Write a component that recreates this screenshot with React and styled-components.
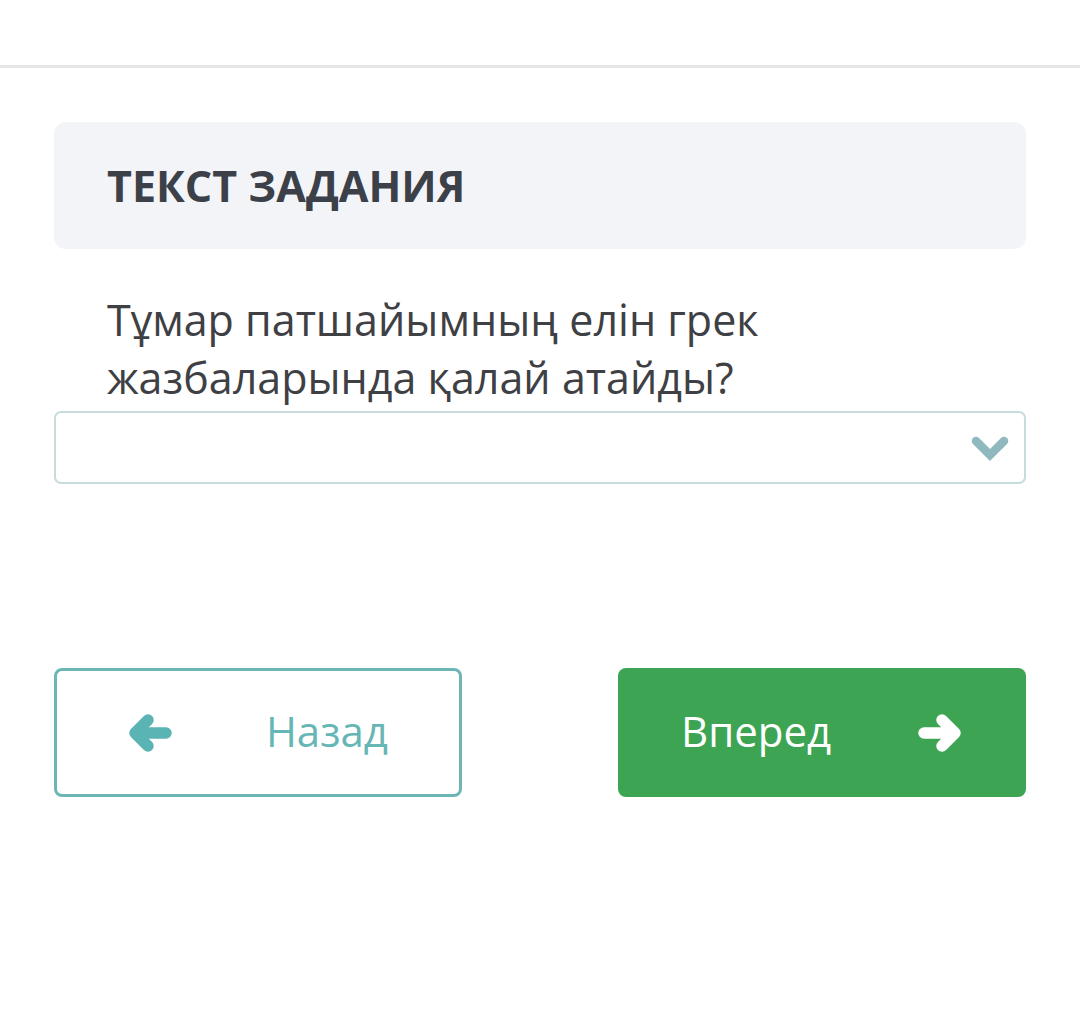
import React from "react";
import styled, { createGlobalStyle } from "styled-components";

const Global = createGlobalStyle`
  html, body { margin: 0; padding: 0; background: #ffffff; }
  body { font-family: "Open Sans", "Noto Sans", sans-serif; }
  * { box-sizing: border-box; }
`;

const Page = styled.div`
  width: 1080px;
  min-height: 1015px;
  background: #fff;
`;

const TopBar = styled.header`
  height: 68px;
  border-bottom: 3px solid #e6e6e6;
`;

const Content = styled.main`
  padding: 54px 54px 0 54px;
  display: flex;
  flex-direction: column;
`;

const TitleCard = styled.section`
  height: 127px;
  background: #f3f4f7;
  border-radius: 12px;
  display: flex;
  align-items: center;
  padding: 0 53px;
`;

const Title = styled.h2`
  margin: 0;
  font-size: 43px;
  font-weight: 700;
  color: #3b4049;
`;

const Question = styled.p`
  margin: 42px 0 4px 0;
  padding: 0 53px;
  font-size: 43px;
  line-height: 58px;
  color: #3e4044;
  max-width: 919px;
`;

const Select = styled.div`
  height: 73px;
  border: 2.5px solid #c6dcdd;
  border-radius: 7px;
  display: flex;
  align-items: center;
  justify-content: flex-end;
  padding-right: 14px;
`;

const Buttons = styled.div`
  margin-top: 184px;
  display: flex;
  justify-content: space-between;
`;

const Button = styled.button`
  width: 408px;
  height: 129px;
  border-radius: 8px;
  font-family: "Open Sans", "Noto Sans", sans-serif;
  font-size: 42px;
  display: flex;
  align-items: center;
  justify-content: space-between;
  cursor: pointer;
  border: ${(p) => (p.$primary ? "none" : "3px solid #6db6b6")};
  background: ${(p) => (p.$primary ? "#3ca453" : "#ffffff")};
  color: ${(p) => (p.$primary ? "#ffffff" : "#66b6b6")};
  padding: ${(p) => (p.$primary ? "0 64px 4px 63px" : "0 71px 4px 71px")};
`;

const IconWrap = styled.span`
  display: flex;
  align-items: center;
  margin-top: 4px;
`;

function Arrow({ dir, color }) {
  const flip = dir === "left" ? "" : "scale(-1,1) translate(-44,0)";
  return (
    <svg width="44" height="40" viewBox="0 0 44 40">
      <g transform={flip} fill="none" stroke={color} strokeWidth="11.5" strokeLinecap="round" strokeLinejoin="round">
        <path d="M38 20 H10" />
        <path d="M20 7 L7 20 L20 33" />
      </g>
    </svg>
  );
}

function Chevron() {
  return (
    <svg width="40" height="30" viewBox="0 0 40 30">
      <path d="M6 8 L20 22 L34 8" fill="none" stroke="#8fb8bf" strokeWidth="8.5" strokeLinecap="round" strokeLinejoin="miter" />
    </svg>
  );
}

export default function App() {
  return (
    <Page>
      <Global />
      <TopBar />
      <Content>
        <TitleCard>
          <Title>ТЕКСТ ЗАДАНИЯ</Title>
        </TitleCard>
        <Question>Тұмар патшайымның елін грек жазбаларында қалай атайды?</Question>
        <Select>
          <Chevron />
        </Select>
        <Buttons>
          <Button>
            <IconWrap><Arrow dir="left" color="#5ab4b4" /></IconWrap>
            <span>Назад</span>
          </Button>
          <Button $primary>
            <span>Вперед</span>
            <IconWrap><Arrow dir="right" color="#ffffff" /></IconWrap>
          </Button>
        </Buttons>
      </Content>
    </Page>
  );
}
